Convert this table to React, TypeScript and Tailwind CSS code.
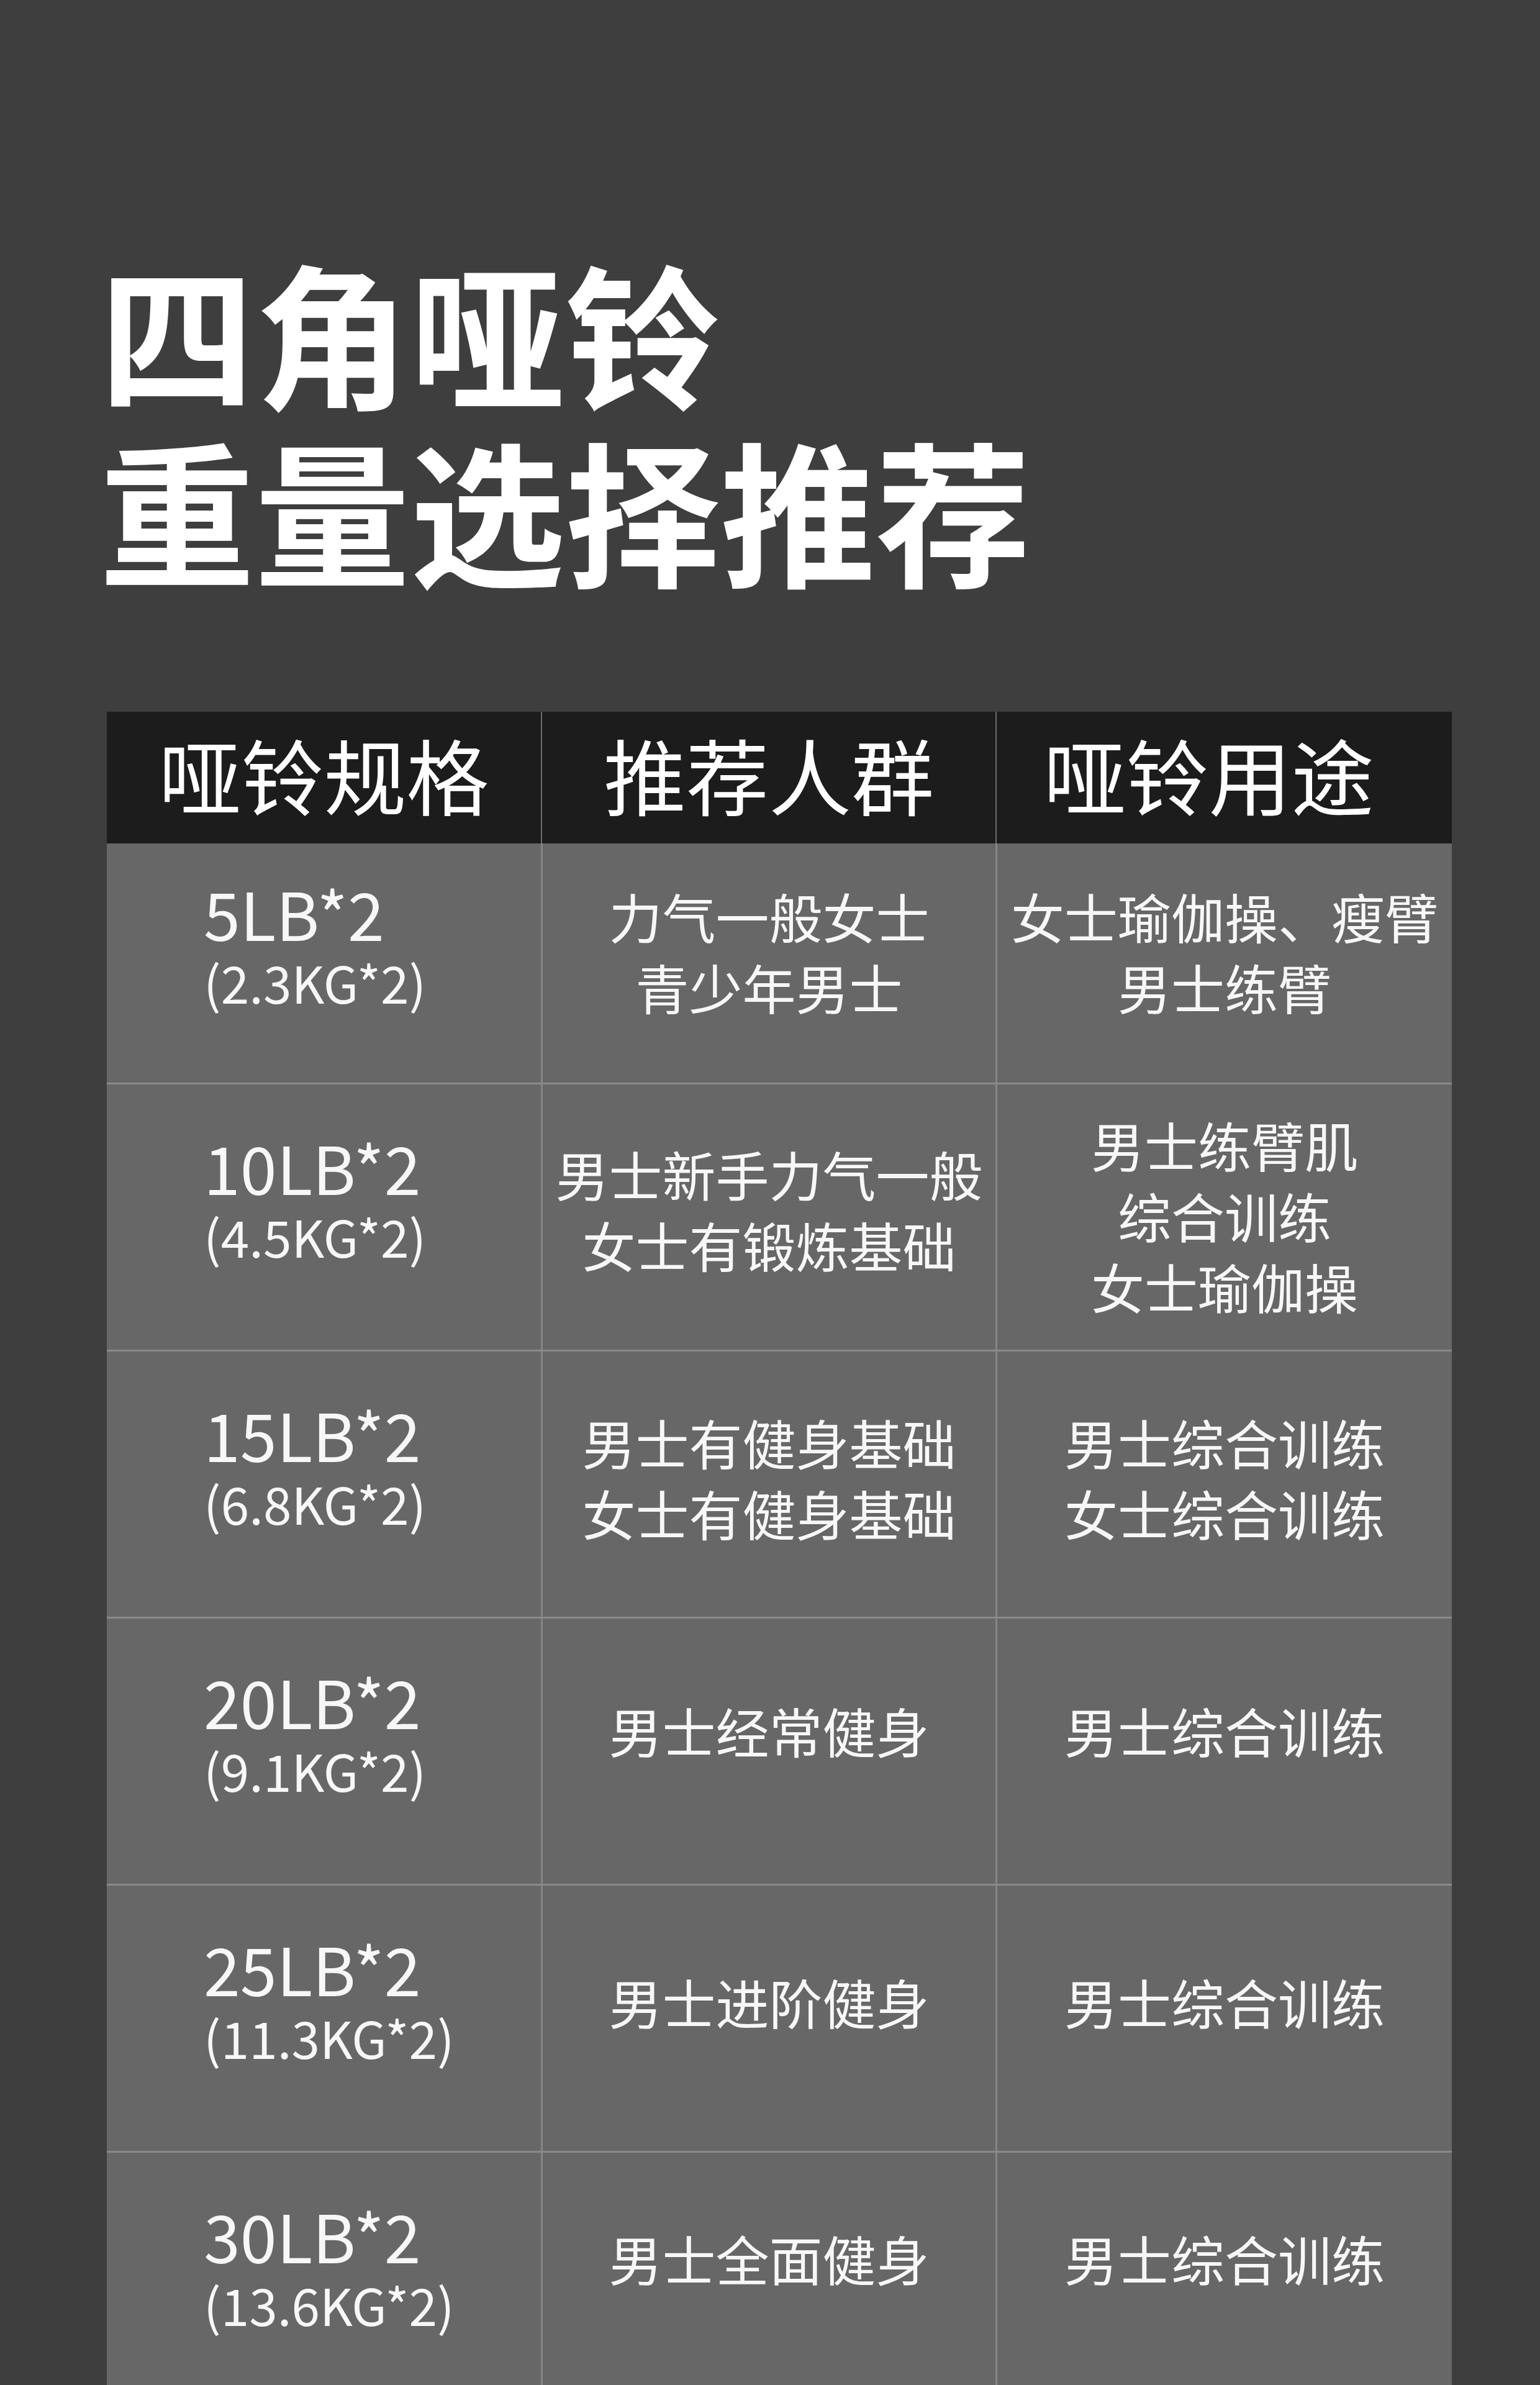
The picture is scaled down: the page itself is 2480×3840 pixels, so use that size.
const rows = [
  { lb: '5LB*2', kg: '(2.3KG*2)', who: ['力气一般女士', '青少年男士'], use: ['女士瑜伽操、瘦臂', '男士练臂'], pad: 'pb-[38px]', padUse: 'pb-[38px]' },
  { lb: '10LB*2', kg: '(4.5KG*2)', who: ['男士新手力气一般', '女士有锻炼基础'], use: ['男士练臂肌', '综合训练', '女士瑜伽操'], pad: 'pb-[26px]', padUse: 'pb-[6px]' },
  { lb: '15LB*2', kg: '(6.8KG*2)', who: ['男士有健身基础', '女士有健身基础'], use: ['男士综合训练', '女士综合训练'], pad: 'pb-[21px]', padUse: 'pb-[21px]' },
  { lb: '20LB*2', kg: '(9.1KG*2)', who: ['男士经常健身'], use: ['男士综合训练'], pad: 'pb-[68px]', padUse: 'pb-[68px]' },
  { lb: '25LB*2', kg: '(11.3KG*2)', who: ['男士进阶健身'], use: ['男士综合训练'], pad: 'pb-[54px]', padUse: 'pb-[54px]' },
  { lb: '30LB*2', kg: '(13.6KG*2)', who: ['男士全面健身'], use: ['男士综合训练'], pad: 'pb-[88px]', padUse: 'pb-[88px]' },
];

export default function App() {
  return (
    <div className="h-[3840px] w-[2480px] overflow-hidden bg-[#3e3e3e] font-['Noto_Sans_CJK_SC',sans-serif] text-white">
      {/* Title */}
      <div className="pl-[160px] pt-[388px]">
        <h1 className="text-[250px] font-bold leading-[286px]">四角哑铃</h1>
        <h1 className="text-[250px] font-bold leading-[286px]">重量选择推荐</h1>
      </div>

      {/* Table */}
      <div className="ml-[172px] mt-[186px] w-[2166px]">
        <div className="grid h-[212px] grid-cols-[699px_732px_735px] bg-[#1c1c1c] text-[133px] leading-none">
          <div className="flex items-center justify-center pb-[14px]">哑铃规格</div>
          <div className="flex items-center justify-center border-l-2 border-[#6e6e6e] pb-[14px]">推荐人群</div>
          <div className="flex items-center justify-center border-l-2 border-[#6e6e6e] pb-[14px] pr-[50px]">哑铃用途</div>
        </div>

        {rows.map((r, idx) => (
          <div
            key={r.lb}
            className={`grid grid-cols-[699px_732px_735px] bg-[#676767] ${
              idx === 0 ? 'h-[385px]' : 'h-[430px] border-t-[3px] border-[#8a8a8a]'
            }`}
          >
            <div className="flex flex-col justify-center pb-[52px] pl-[156px] text-[#f7f7f7]">
              <div className="text-[106px] leading-[112px]">{r.lb}</div>
              <div className="text-[82px] leading-[112px]">{r.kg}</div>
            </div>
            <div className={`flex flex-col items-center justify-center border-l-[3px] border-[#858585] text-[86px] leading-[114px] whitespace-nowrap text-[#f7f7f7] ${r.pad}`}>
              {r.who.map((t) => (
                <div key={t}>{t}</div>
              ))}
            </div>
            <div className={`flex flex-col items-center justify-center border-l-[3px] border-[#858585] text-[86px] leading-[114px] whitespace-nowrap text-[#f7f7f7] ${r.padUse}`}>
              {r.use.map((t) => (
                <div key={t}>{t}</div>
              ))}
            </div>
          </div>
        ))}
      </div>
    </div>
  );
}
